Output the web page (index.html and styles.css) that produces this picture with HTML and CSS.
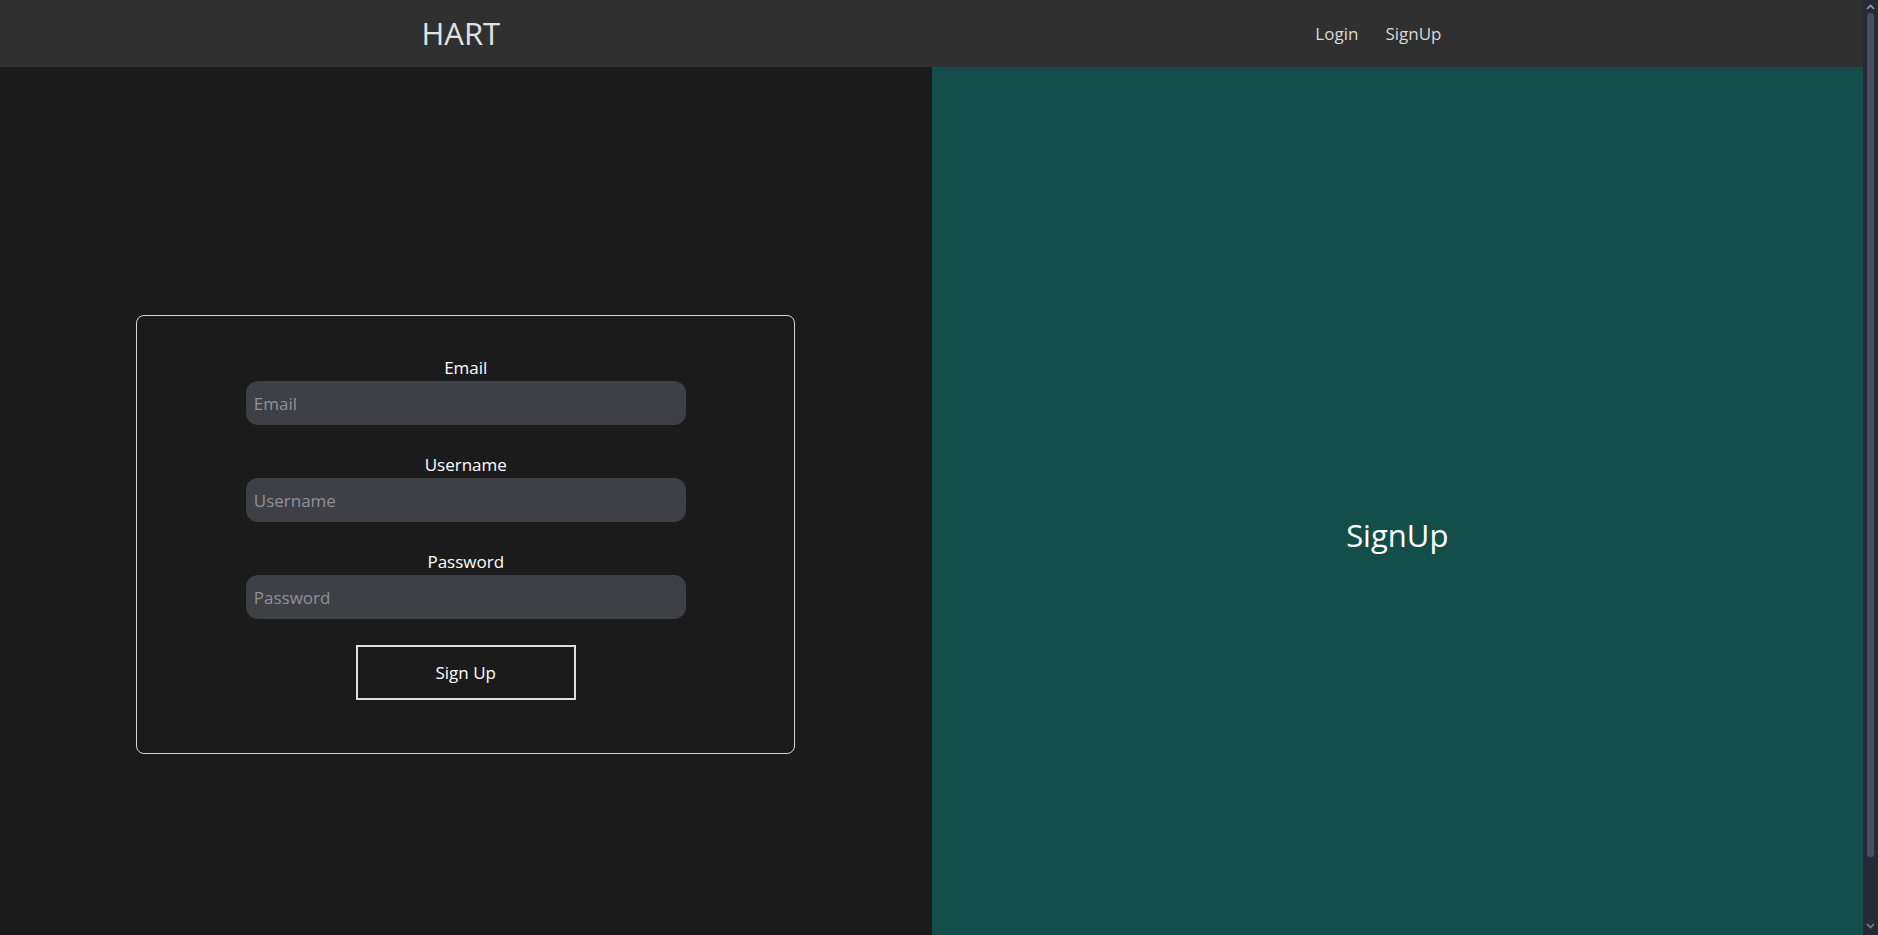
FILE: index.html
```html
<!DOCTYPE html>
<html lang="en">
<head>
<meta charset="utf-8">
<title>HART - SignUp</title>
<link rel="stylesheet" href="styles.css">
</head>
<body>
<nav class="navbar">
  <div class="nav-inner">
    <a class="brand" href="#">HART</a>
    <div class="nav-links">
      <a class="nav-link" href="#">Login</a>
      <a class="nav-link" href="#">SignUp</a>
    </div>
  </div>
</nav>
<main class="split">
  <section class="form-panel">
    <form class="card">
      <div class="group">
        <label class="label" for="email">Email</label>
        <input class="field" id="email" type="email" placeholder="Email">
      </div>
      <div class="group">
        <label class="label" for="username">Username</label>
        <input class="field" id="username" type="text" placeholder="Username">
      </div>
      <div class="group">
        <label class="label" for="password">Password</label>
        <input class="field" id="password" type="password" placeholder="Password">
      </div>
      <button class="submit" type="button">Sign Up</button>
    </form>
  </section>
  <section class="side-panel">
    <h2 class="side-title">SignUp</h2>
  </section>
</main>
<div class="scrollbar" aria-hidden="true">
  <svg class="sb-arrow" width="15" height="12" viewBox="0 0 15 12"><path d="M4 9 L7.5 5.5 L11 9" fill="none" stroke="#9a9aa6" stroke-width="1.6"/></svg>
  <div class="sb-thumb"></div>
  <svg class="sb-arrow sb-down" width="15" height="12" viewBox="0 0 15 12"><path d="M4 3 L7.5 6.5 L11 3" fill="none" stroke="#7d7d8a" stroke-width="1.6"/></svg>
</div>
</body>
</html>
```

FILE: styles.css
```css
* { box-sizing: border-box; }

html, body {
  margin: 0;
  padding: 0;
}

body {
  background: #1b1b1b;
  font-family: "Segoe UI", "Open Sans", "Noto Sans", sans-serif;
  color: #ffffff;
  margin-right: 15px;
}

.navbar {
  height: 67px;
  background: #303030;
  display: flex;
  align-items: center;
}

.nav-inner {
  width: 1020px;
  margin: 0 auto;
  display: flex;
  align-items: center;
  justify-content: space-between;
}

.brand {
  color: #e2e2e2;
  font-size: 31px;
  text-decoration: none;
  line-height: 1;
}

.nav-links {
  display: flex;
  gap: 27px;
}

.nav-link {
  color: #d9d9d9;
  font-size: 17px;
  text-decoration: none;
}

.split {
  display: flex;
}

.form-panel,
.side-panel {
  flex: 1 1 50%;
  height: 100vh;
  display: flex;
  align-items: center;
  justify-content: center;
}

.form-panel { background: #1b1b1b; }
.side-panel { background: #134e4a; }

.card {
  width: 659px;
  padding: 38px 0 53px;
  border: 1px solid #d6d6d6;
  border-radius: 8px;
  display: flex;
  flex-direction: column;
  align-items: center;
}

.group {
  display: flex;
  flex-direction: column;
  align-items: center;
  margin-bottom: 26px;
}

.label {
  font-size: 17px;
  line-height: 27px;
  color: #ffffff;
}

.field {
  width: 440px;
  height: 44px;
  border: none;
  outline: none;
  border-radius: 12px;
  background: #3f4046;
  color: #ffffff;
  font-family: inherit;
  font-size: 17px;
  padding: 0 8px;
}

.field::placeholder { color: #8e9199; }

.submit {
  width: 220px;
  height: 55px;
  background: transparent;
  border: 2px solid #dedede;
  color: #ffffff;
  font-family: inherit;
  font-size: 17px;
  cursor: pointer;
}

.side-title {
  margin: 0;
  font-weight: 400;
  font-size: 31px;
  color: #ffffff;
}

.scrollbar {
  position: fixed;
  top: 0;
  right: 0;
  width: 15px;
  height: 100vh;
  background: #272935;
  display: flex;
  flex-direction: column;
  align-items: center;
}

.sb-arrow {
  display: block;
  flex: 0 0 12px;
}

.sb-thumb {
  width: 7px;
  height: 844px;
  margin-top: 1px;
  border-radius: 4px;
  background: #4b4d65;
}

.sb-down {
  margin-top: auto;
  margin-bottom: 2px;
}
```
